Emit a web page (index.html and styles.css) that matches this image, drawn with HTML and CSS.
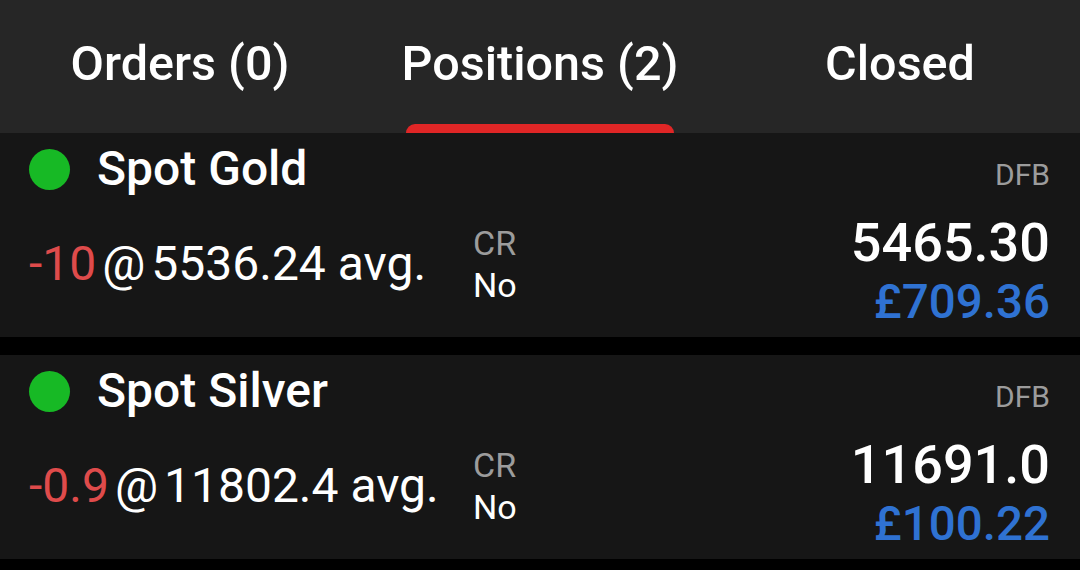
FILE: index.html
```html
<!DOCTYPE html>
<html>
<head>
<meta charset="utf-8">
<link rel="stylesheet" href="styles.css">
</head>
<body>
<div class="tabs">
  <div class="tab"><span class="tab-label">Orders (0)</span></div>
  <div class="tab active"><span class="tab-label">Positions (2)</span><span class="indicator"></span></div>
  <div class="tab"><span class="tab-label">Closed</span></div>
</div>

<div class="card">
  <div class="head">
    <span class="dot"></span>
    <span class="name">Spot Gold</span>
    <span class="type">DFB</span>
  </div>
  <div class="body">
    <div class="qty"><span class="neg">-10</span><span class="at">@</span><span class="avg">5536.24 avg.</span></div>
    <div class="cr"><span class="cr-label">CR</span><span class="cr-value">No</span></div>
    <div class="prices"><span class="price">5465.30</span><span class="pnl">£709.36</span></div>
  </div>
</div>

<div class="card">
  <div class="head">
    <span class="dot"></span>
    <span class="name">Spot Silver</span>
    <span class="type">DFB</span>
  </div>
  <div class="body">
    <div class="qty"><span class="neg">-0.9</span><span class="at">@</span><span class="avg">11802.4 avg.</span></div>
    <div class="cr"><span class="cr-label">CR</span><span class="cr-value">No</span></div>
    <div class="prices"><span class="price">11691.0</span><span class="pnl">£100.22</span></div>
  </div>
</div>
</body>
</html>
```

FILE: styles.css
```css
* { box-sizing: border-box; }
html, body { margin: 0; padding: 0; }
body {
  width: 1080px;
  height: 570px;
  overflow: hidden;
  background: #000;
  font-family: Roboto, "Noto Sans", sans-serif;
  color: #fff;
}

.tabs {
  display: grid;
  grid-template-columns: repeat(3, 1fr);
  height: 133px;
  background: #262626;
}
.tab {
  display: flex;
  flex-direction: column;
  align-items: center;
  padding-top: 36px;
}
.tab-label {
  font-size: 48.5px;
  font-weight: 500;
  line-height: 56px;
  color: #fff;
}
.indicator {
  margin-top: auto;
  width: 268px;
  height: 9px;
  background: #e02626;
  border-radius: 9px 9px 0 0;
}

.card {
  background: #161616;
  height: 204px;
  margin-bottom: 18px;
  padding: 8px 30px 0 29px;
}
.head {
  display: flex;
  align-items: baseline;
  height: 56px;
}
.dot {
  align-self: center;
  width: 41px;
  height: 41px;
  border-radius: 50%;
  background: #17b925;
  margin-right: 27px;
  flex: none;
}
.name {
  font-size: 48px;
  font-weight: 500;
  line-height: 56px;
}
.type {
  margin-left: auto;
  font-size: 30px;
  line-height: 32px;
  color: #9c9c9c;
}

.body {
  display: flex;
  align-items: flex-start;
}
.qty {
  width: 444px;
  flex: none;
  display: flex;
  gap: 6px;
  margin-top: 38.5px;
  font-size: 48px;
  line-height: 56px;
  white-space: nowrap;
}
.neg { color: #df4b4b; }
.at { color: #fff; }
.avg { color: #fff; }

.cr {
  display: flex;
  flex-direction: column;
  margin-top: 25.4px;
  font-size: 34px;
  line-height: 42px;
}
.cr-label { color: #9c9c9c; }
.cr-value { color: #fff; }

.prices {
  flex: 1;
  display: flex;
  flex-direction: column;
  align-items: flex-end;
  margin-top: 14.5px;
  font-weight: 500;
}
.price {
  font-size: 54px;
  line-height: 62px;
  color: #fff;
}
.pnl {
  font-size: 47.5px;
  line-height: 56px;
  color: #2f72d2;
}
```
